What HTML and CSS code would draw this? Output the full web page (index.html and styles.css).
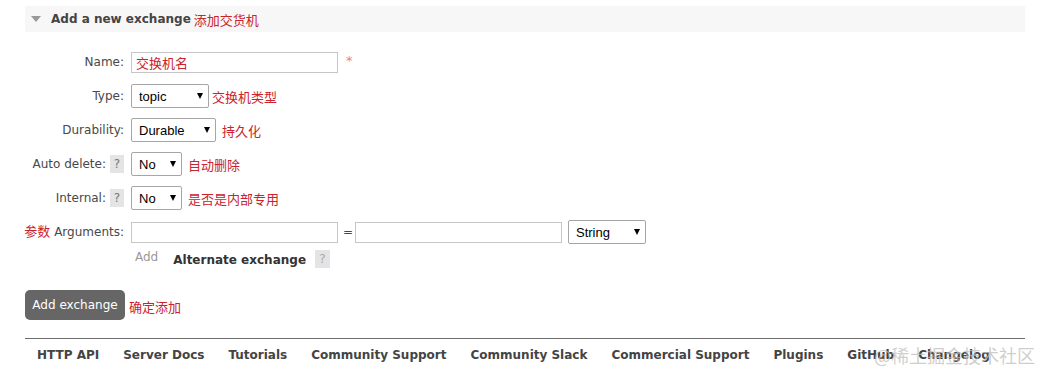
FILE: index.html
```html
<!DOCTYPE html>
<html lang="en">
<head>
  <meta charset="UTF-8">
  <title>Add a new exchange</title>
  <link rel="stylesheet" href="styles.css">
</head>
<body>

<div class="page">
  <h2 class="section-head"><span class="toggle"></span>Add a new exchange <span class="note">添加交货机</span></h2>

  <form class="form" onsubmit="return false">
    <label class="lbl">Name:</label>
    <div class="field">
      <input type="text" class="text red-value" value="交换机名">
      <span class="mand">*</span>
    </div>

    <label class="lbl">Type:</label>
    <div class="field">
      <span class="sel w78"><select><option>topic</option><option>direct</option><option>fanout</option><option>headers</option></select></span>
      <span class="note tight">交换机类型</span>
    </div>

    <label class="lbl">Durability:</label>
    <div class="field">
      <span class="sel w85"><select><option>Durable</option><option>Transient</option></select></span>
      <span class="note">持久化</span>
    </div>

    <label class="lbl">Auto delete: <span class="help">?</span></label>
    <div class="field">
      <span class="sel w51"><select><option>No</option><option>Yes</option></select></span>
      <span class="note">自动删除</span>
    </div>

    <label class="lbl">Internal: <span class="help">?</span></label>
    <div class="field">
      <span class="sel w51"><select><option>No</option><option>Yes</option></select></span>
      <span class="note">是否是内部专用</span>
    </div>

    <label class="lbl"><span class="note">参数</span> Arguments:</label>
    <div class="field args">
      <input type="text" class="text">
      <span class="eq">=</span>
      <input type="text" class="text">
      <span class="sel w78"><select><option>String</option><option>Number</option><option>Boolean</option><option>List</option></select></span>
    </div>
  </form>

  <div class="extra">
    <span class="add">Add</span>
    <strong class="alt">Alternate exchange</strong>
    <span class="help tall">?</span>
  </div>

  <div class="submit">
    <button class="btn">Add exchange</button>
    <span class="note">确定添加</span>
  </div>

  <ul class="footer">
    <li>HTTP API</li>
    <li>Server Docs</li>
    <li>Tutorials</li>
    <li>Community Support</li>
    <li>Community Slack</li>
    <li>Commercial Support</li>
    <li>Plugins</li>
    <li>GitHub</li>
    <li>Changelog</li>
  </ul>
</div>

<span class="watermark">@稀土掘金技术社区</span>

</body>
</html>
```

FILE: styles.css
```css
body {
  margin: 0;
  font-family: 'DejaVu Sans', Verdana, sans-serif;
  font-size: 12px;
  color: #484848;
  background: #fff;
}
.page {
  padding: 6px 25px 0;
}
.note {
  font-family: 'Noto Sans CJK SC', sans-serif;
  font-weight: normal;
  font-size: 13px;
  line-height: 15px;
  color: #c9232d;
}
.section-head {
  margin: 0;
  height: 26px;
  display: flex;
  align-items: center;
  background: #f7f7f7;
  font-size: 12px;
  font-weight: bold;
  color: #444;
  padding-left: 6px;
}
.section-head .note {
  margin-left: 3px;
}
.toggle {
  width: 0;
  height: 0;
  border-left: 5px solid transparent;
  border-right: 5px solid transparent;
  border-top: 6px solid #999;
  margin-right: 10px;
}
.form {
  display: grid;
  grid-template-columns: 99px 1fr;
  column-gap: 7px;
  row-gap: 10px;
  grid-auto-rows: 24px;
  margin-top: 18px;
}
.lbl {
  display: flex;
  align-items: center;
  justify-content: flex-end;
  white-space: nowrap;
  gap: 4px;
}
.lbl .note {
  margin-left: -2px;
  margin-bottom: 4px;
}
.field {
  display: flex;
  align-items: center;
  gap: 6px;
}
.text {
  width: 207px;
  height: 21px;
  box-sizing: border-box;
  border: 1px solid #c6c6c6;
  padding: 0 4px;
  font-size: 13px;
  font-family: 'Noto Sans CJK SC', sans-serif;
  outline: none;
}
.red-value {
  color: #c9232d;
}
.mand {
  color: #f08080;
  font-size: 13px;
  margin-left: 2px;
  margin-top: -4px;
}
.sel {
  position: relative;
  display: inline-block;
  height: 24px;
}
.sel select {
  appearance: none;
  -webkit-appearance: none;
  width: 100%;
  height: 24px;
  border: 1px solid #a6a6a6;
  border-radius: 2px;
  background: #fff;
  padding: 0 7px;
  font-family: 'Liberation Sans', Arial, sans-serif;
  font-size: 13px;
  color: #000;
}
.sel::after {
  content: "";
  position: absolute;
  right: 6px;
  top: 9px;
  border-left: 3.5px solid transparent;
  border-right: 3.5px solid transparent;
  border-top: 6px solid #000;
  pointer-events: none;
}
.w78 { width: 78px; }
.w85 { width: 85px; }
.w51 { width: 51px; }
.tight { margin-left: -3px; }
.help {
  display: inline-flex;
  align-items: center;
  justify-content: center;
  width: 14px;
  height: 18px;
  background: #e4e4e4;
  color: #777;
  font-size: 12px;
}
.help.tall {
  width: 15px;
  height: 18px;
  color: #aaa;
}
.args {
  gap: 5px;
}
.args .sel {
  margin-left: 1px;
}
.eq {
  width: 7px;
  text-align: center;
}
.extra {
  display: flex;
  align-items: center;
  height: 22px;
  margin-top: 4px;
  padding-left: 110px;
}
.add {
  color: #999;
  margin-top: -5px;
}
.alt {
  font-size: 12px;
  color: #333;
  margin-left: 15px;
  margin-right: 9px;
  margin-top: 2px;
}
.submit {
  display: flex;
  align-items: center;
  margin-top: 20px;
  gap: 4px;
}
.btn {
  width: 100px;
  height: 30px;
  background: #666;
  border: none;
  border-radius: 5px;
  color: #fff;
  font-family: 'DejaVu Sans', Verdana, sans-serif;
  font-size: 12px;
  padding: 0;
  cursor: pointer;
}
.submit .note {
  margin-top: 2px;
}
.footer {
  list-style: none;
  margin: 18px 0 0;
  padding: 9px 0 0;
  border-top: 1px solid #6e6e6e;
  display: flex;
}
.footer li {
  padding: 0 12px;
  font-weight: bold;
  color: #444;
  line-height: 15px;
}
.watermark {
  position: absolute;
  left: 874px;
  top: 342px;
  font-family: 'Noto Sans CJK SC', sans-serif;
  font-size: 18px;
  color: rgba(190, 190, 190, 0.75);
  white-space: nowrap;
}
```
